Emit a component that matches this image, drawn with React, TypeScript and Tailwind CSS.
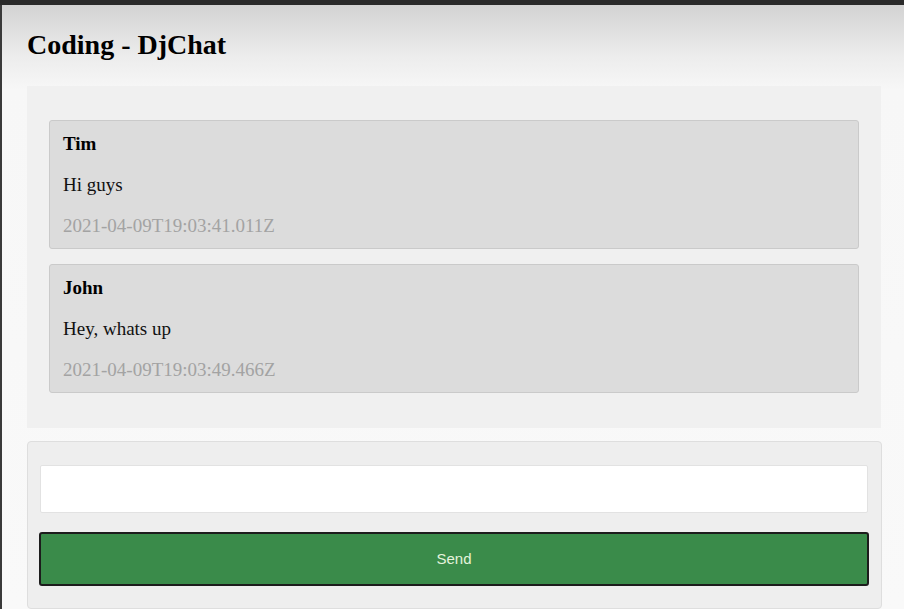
const messages = [
  { user: "Tim", text: "Hi guys", at: "2021-04-09T19:03:41.011Z" },
  { user: "John", text: "Hey, whats up", at: "2021-04-09T19:03:49.466Z" },
];

export default function App() {
  return (
    <div className="h-[609px] w-[904px] overflow-hidden flex flex-col bg-[#fafafa] font-['Liberation_Serif',serif]">
      <div className="h-[5px] shrink-0 bg-[#2a2a2a]" />
      <div className="flex flex-1 min-h-0">
        <div className="w-[2px] shrink-0 bg-[#3a3a3a]" />
        <main className="flex-1 pl-[25px] pr-[20px] bg-[linear-gradient(to_bottom,#d3d3d3_0px,#ececec_50px,#f7f7f7_85px,#f9f9f9_100%)]">
          <h1 className="mt-[22px] mb-[2px] h-[57px] text-[28px] font-bold leading-[36px] text-black">Coding - DjChat</h1>

          <section className="w-[854px] bg-[#f0f0f0] pt-[34px] pb-[35px] px-[22px] flex flex-col gap-[15px]">
            {messages.map((m) => (
              <div key={m.at} className="rounded-[3px] border border-[#cacaca] bg-[#dcdcdc] px-[13px] pt-[12px] pb-[11px] text-[19px] leading-[22px]">
                <p className="font-bold text-black">{m.user}</p>
                <p className="mt-[19px] text-[#111]">{m.text}</p>
                <p className="mt-[19px] text-[#a3a3a3]">{m.at}</p>
              </div>
            ))}
          </section>

          <form className="mt-[13px] w-[855px] rounded-[4px] border border-[#dedede] bg-[#eeeeee] px-[12px] pt-[23px] pb-[22px]">
            <input
              type="text"
              className="block w-[828px] h-[48px] rounded-[2px] border border-[#e2e2e2] bg-white outline-none"
            />
            <button
              type="button"
              className="mt-[19px] block w-[830px] h-[54px] -ml-px rounded-[3px] border-2 border-[#1c1c1c] bg-[#3a8b4a] text-[15px] text-[#e4f3dc] font-['Liberation_Sans',sans-serif]"
            >
              Send
            </button>
          </form>
        </main>
      </div>
    </div>
  );
}
